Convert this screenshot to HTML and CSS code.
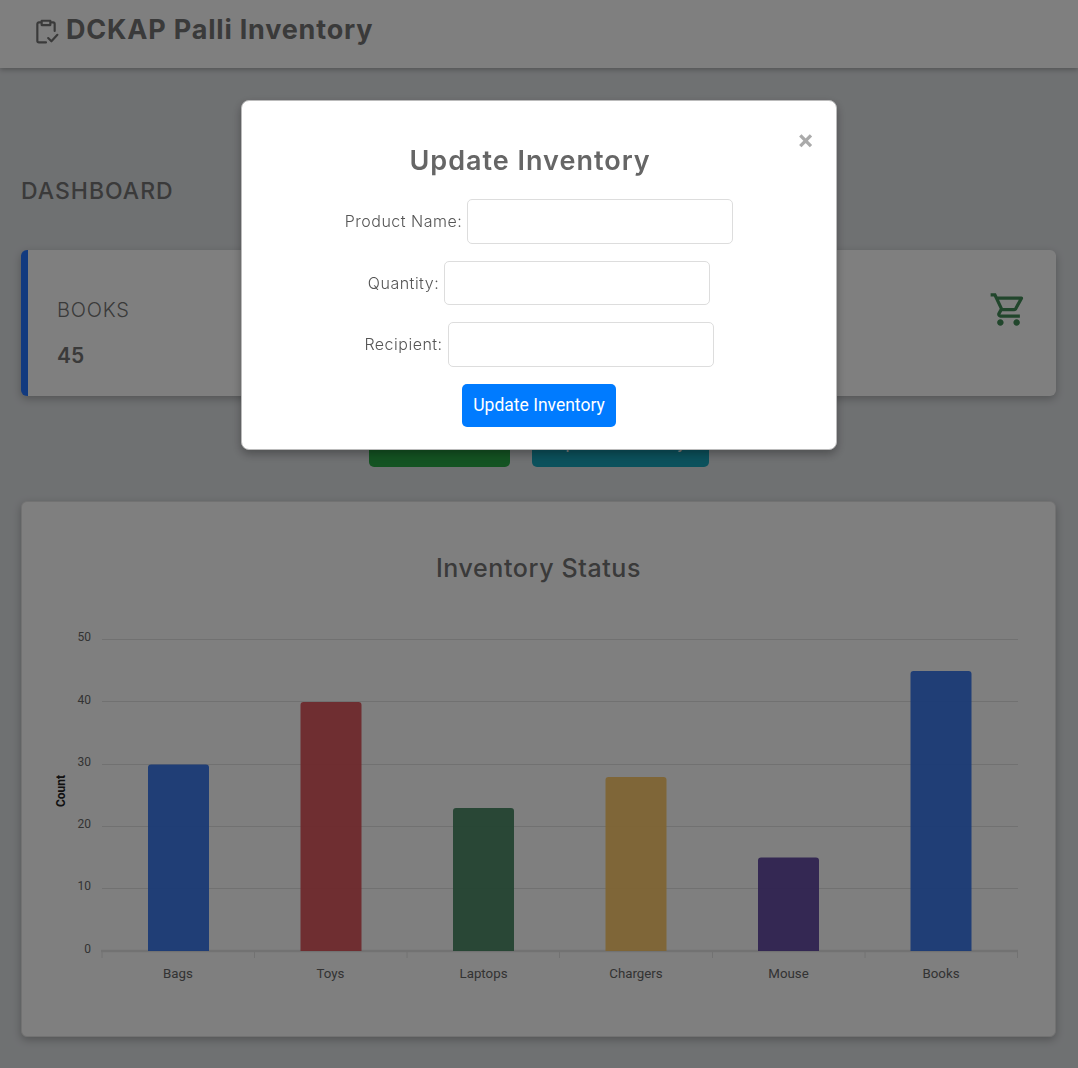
FILE: index.html
```html
<!DOCTYPE html>
<html>
<head>
	<meta charset="utf-8">
	<title>DCKAP Palli Inventory</title>
	<link rel="stylesheet" href="styles.css">
</head>
<body>

	<header class="navbar">
		<svg class="nav-icon" viewBox="0 0 24 24" fill="none" stroke="currentColor" stroke-width="2" stroke-linecap="round" stroke-linejoin="round">
			<path d="M7 4H5.500A1.500 1.500 0 0 0 4 5.500V21a1.500 1.500 0 0 0 1.500 1.500H12"/>
			<path d="M17 4h1.500A1.500 1.500 0 0 1 20 5.500V12"/>
			<path d="M8 2.500h8V6.500H8z"/>
			<path d="M14 18.500l3 3 5.500-6"/>
		</svg>
		<h1 class="brand">DCKAP Palli Inventory</h1>
	</header>

	<main class="content">
		<h2 class="page-title">DASHBOARD</h2>

		<section class="stat-card">
			<div>
				<p class="stat-label">BOOKS</p>
				<p class="stat-value">45</p>
			</div>
			<svg class="cart-icon" viewBox="0 0 24 24" fill="currentColor">
				<path d="M15.550 13c.750 0 1.410-.410 1.750-1.030l3.580-6.490c.370-.660-.110-1.480-.870-1.480H5.210l-.940-2H1v2h2l3.600 7.590-1.350 2.440C4.520 15.370 5.480 17 7 17h12v-2H7l1.100-2h7.450zM6.160 6h12.150l-2.760 5H8.530L6.160 6zM7 18c-1.100 0-1.990.900-1.990 2S5.900 22 7 22s2-.900 2-2-.900-2-2-2zm10 0c-1.100 0-1.990.900-1.990 2s.890 2 1.990 2 2-.900 2-2-.900-2-2-2z"/>
			</svg>
		</section>

		<div class="actions">
			<button class="btn btn-green">Add Product</button>
			<button class="btn btn-teal">Update Inventory</button>
		</div>

		<section class="chart-card">
			<h3 class="chart-title">Inventory Status</h3>
			<!-- svg sits at page x=22, y=620 so the numbers below read as page coords -->
			<svg class="chart" width="1033" height="380" viewBox="22 620 1033 380">
				<g class="grid">
					<line x1="102" x2="1018" y1="639.500" y2="639.500"/>
					<line x1="102" x2="1018" y1="701.500" y2="701.500"/>
					<line x1="102" x2="1018" y1="764.500" y2="764.500"/>
					<line x1="102" x2="1018" y1="826.500" y2="826.500"/>
					<line x1="102" x2="1018" y1="888.500" y2="888.500"/>
				</g>

				<g class="axis">
					<line x1="101" x2="1018" y1="951" y2="951" class="axis-base"/>
					<line x1="102" x2="102" y1="951" y2="958"/>
					<line x1="254.500" x2="254.500" y1="951" y2="958"/>
					<line x1="407" x2="407" y1="951" y2="958"/>
					<line x1="559.500" x2="559.500" y1="951" y2="958"/>
					<line x1="712.500" x2="712.500" y1="951" y2="958"/>
					<line x1="865" x2="865" y1="951" y2="958"/>
					<line x1="1017.500" x2="1017.500" y1="951" y2="958"/>
				</g>

				<path class="bar bar-blue" d="M148 951V767.500a3 3 0 0 1 3-3h55a3 3 0 0 1 3 3V951z"/>
				<path class="bar bar-red" d="M300.500 951V705a3 3 0 0 1 3-3h55a3 3 0 0 1 3 3V951z"/>
				<path class="bar bar-green" d="M453 951V811a3 3 0 0 1 3-3h55a3 3 0 0 1 3 3V951z"/>
				<path class="bar bar-orange" d="M605.500 951V780a3 3 0 0 1 3-3h55a3 3 0 0 1 3 3V951z"/>
				<path class="bar bar-purple" d="M758 951V860.500a3 3 0 0 1 3-3h55a3 3 0 0 1 3 3V951z"/>
				<path class="bar bar-blue" d="M910.500 951V674a3 3 0 0 1 3-3h55a3 3 0 0 1 3 3V951z"/>

				<g class="y-labels">
					<text x="91" y="641">50</text>
					<text x="91" y="704">40</text>
					<text x="91" y="766">30</text>
					<text x="91" y="828">20</text>
					<text x="91" y="890">10</text>
					<text x="91" y="953">0</text>
				</g>
				<g class="x-labels">
					<text x="178" y="978">Bags</text>
					<text x="330.500" y="978">Toys</text>
					<text x="483.500" y="978">Laptops</text>
					<text x="636" y="978">Chargers</text>
					<text x="788.500" y="978">Mouse</text>
					<text x="941" y="978">Books</text>
				</g>
				<text class="y-title" transform="translate(65 791) rotate(-90)">Count</text>
			</svg>
		</section>
	</main>

	<div class="overlay">
		<div class="modal">
			<span class="close">&times;</span>
			<h2 class="modal-title">Update Inventory</h2>
			<form>
				<div class="field">
					<label for="product">Product Name:</label>
					<input type="text" id="product">
				</div>
				<div class="field">
					<label for="quantity">Quantity:</label>
					<input type="text" id="quantity">
				</div>
				<div class="field">
					<label for="recipient">Recipient:</label>
					<input type="text" id="recipient">
				</div>
				<button type="button" class="btn btn-blue">Update Inventory</button>
			</form>
		</div>
	</div>

</body>
</html>
```

FILE: styles.css
```css
* {
	box-sizing: border-box;
}

body {
	margin: 0;
	font-family: Inter, "Noto Sans", sans-serif;
	background: #dfe2e5;
	color: #747474;
}

.navbar {
	height: 68px;
	display: flex;
	align-items: center;
	gap: 7px;
	padding: 0 0 10px 33px;
	background: #fff;
	box-shadow: 0 2px 5px rgba(0, 0, 0, .25);
}

.nav-icon {
	width: 26px;
	height: 26px;
	margin-top: 4px;
}

.brand {
	margin: 0;
	font-size: 27px;
	letter-spacing: .8px;
	font-weight: 700;
}

.content {
	padding: 0 22px 32px 21px;
}

.page-title {
	margin: 0;
	padding-top: 110px;
	font-size: 23px;
	letter-spacing: 1px;
	line-height: 26px;
	font-weight: 500;
}

.stat-card {
	height: 146px;
	margin-top: 46px;
	display: flex;
	justify-content: space-between;
	padding: 40px 28px 0 29px;
	background: #fff;
	border-left: 7px solid #2474ff;
	border-radius: 6px;
	box-shadow: 0 3px 8px rgba(0, 0, 0, .25);
}

.stat-label {
	margin: 8px 0 0;
	font-size: 20px;
	letter-spacing: .8px;
	line-height: 24px;
	font-weight: 300;
}

.stat-value {
	margin: 21px 0 0;
	font-size: 21px;
	line-height: 26px;
	font-weight: 600;
}

.cart-icon {
	width: 39px;
	height: 39px;
	color: #428c58;
}

.actions {
	display: flex;
	justify-content: center;
	gap: 22px;
	margin-top: 28px;
}

.btn {
	height: 43px;
	padding: 0;
	border: 0;
	border-radius: 5px;
	font-family: Roboto, sans-serif;
	font-size: 17.500px;
	color: #fff;
	white-space: nowrap;
}

.btn-green {
	width: 141px;
	padding-bottom: 7px;
	background: #28a745;
}

.btn-teal {
	width: 177px;
	padding-bottom: 7px;
	background: #17a2b8;
}

.btn-blue {
	width: 154px;
	background: #007bff;
}

.chart-card {
	height: 536px;
	margin-top: 34px;
	background: #fff;
	border: 1px solid #e4e4e4;
	border-radius: 6px;
	box-shadow: 0 3px 8px rgba(0, 0, 0, .25);
	overflow: hidden;
}

.chart-title {
	margin: 52px 0 0;
	height: 66px;
	text-align: center;
	font-size: 25px;
	letter-spacing: .6px;
	line-height: 28px;
	font-weight: 500;
}

.chart {
	display: block;
}

.grid line {
	stroke: #e2e2e2;
	stroke-width: 1;
}

.bar {
	fill-opacity: .92;
}

.bar-blue {
	fill: #3072ec;
}

.bar-red {
	fill: #dc4f55;
}

.bar-green {
	fill: #438560;
}

.bar-orange {
	fill: #ffc964;
}

.bar-purple {
	fill: #5c429f;
}

.axis line {
	stroke: #e4e4e4;
	stroke-width: 1;
}

.axis .axis-base {
	stroke-width: 2.500;
}

.y-labels text,
.x-labels text,
.y-title {
	font-family: Roboto, sans-serif;
	font-size: 12px;
	fill: #666;
}

.x-labels text {
	font-size: 13.300px;
	text-anchor: middle;
}

.y-labels text {
	text-anchor: end;
}

.y-title {
	font-weight: 700;
	fill: #222;
	text-anchor: middle;
}

.overlay {
	position: fixed;
	top: 0;
	left: 0;
	width: 100%;
	height: 100%;
	padding-top: 100px;
	background: rgba(0, 0, 0, .5);
}

.modal {
	width: 596px;
	height: 350px;
	margin: 0 auto 0 241px;
	padding: 20px;
	background: #fff;
	border: 1px solid #bbb;
	border-radius: 8px;
	box-shadow: 0 4px 10px rgba(0, 0, 0, .3);
	text-align: center;
}

.close {
	float: right;
	margin: 0 3px 0 0;
	font-family: Roboto, sans-serif;
	font-size: 28px;
	line-height: 40px;
	font-weight: 700;
	color: #aaa;
}

.modal-title {
	margin: 20px 0 18px;
	font-size: 27px;
	letter-spacing: 1px;
	line-height: 40px;
	font-weight: 600;
	color: #666;
}

.field {
	height: 44.500px;
	margin-bottom: 17px;
	display: flex;
	justify-content: center;
	align-items: center;
	gap: 5px;
}

.field label {
	font-size: 16px;
	letter-spacing: .5px;
	font-weight: 300;
	color: #555;
}

.field input {
	width: 266px;
	height: 44.500px;
	border: 1px solid #ddd;
	border-radius: 5px;
	background: #fff;
}
```
